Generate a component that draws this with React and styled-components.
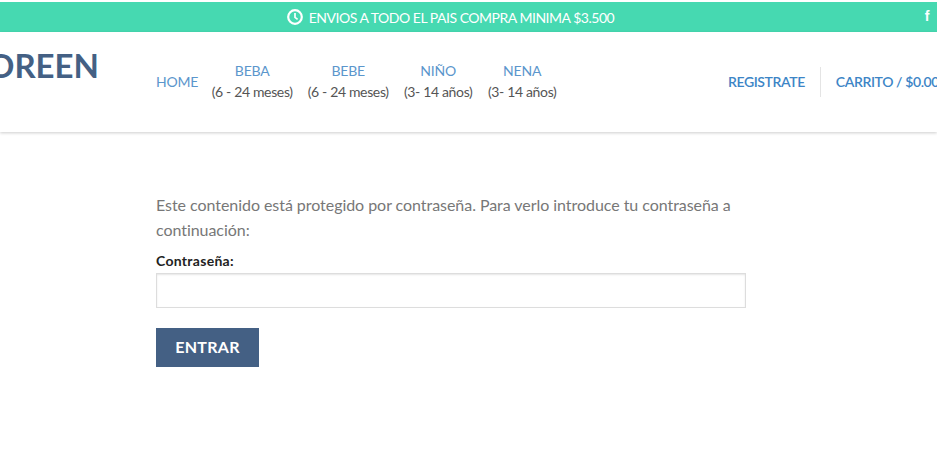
import React from "react";
import styled, { createGlobalStyle } from "styled-components";

const Global = createGlobalStyle`
  html, body { margin: 0; padding: 0; background: #fff; }
  body { font-family: Lato, "Liberation Sans", sans-serif; overflow: hidden; }
`;
const Page = styled.div`
  width: 937px;
  height: 459px;
  overflow: hidden;
  padding-top: 2px;
  box-sizing: border-box;
`;
const TopBar = styled.div`
  position: relative;
  height: 30px;
  background: #46d9b1;
  color: #fff;
  display: flex;
  align-items: center;
  justify-content: center;
  gap: 6px;
  font-size: 14px;
  letter-spacing: -0.48px;
  padding-right: 36px;
`;
const Social = styled.span`
  position: absolute;
  right: 8px;
  top: 6px;
  font: bold 14px "Liberation Sans", sans-serif;
`;
const Header = styled.header`
  height: 100px;
  background: #fff;
  box-shadow: 0 1px 3px rgba(0, 0, 0, 0.2);
  display: flex;
  align-items: center;
  position: relative;
`;
const Logo = styled.div`
  width: 156px;
  flex: none;
  margin-top: -34px;
  font-size: 33px;
  font-weight: 700;
  color: #446084;
  display: flex;
  justify-content: flex-end;
  padding-right: 57px;
  box-sizing: border-box;
  white-space: nowrap;
`;
const Nav = styled.nav`
  display: flex;
  align-items: center;
  gap: 14px;
  flex: none;
  margin-top: -2px;
`;
const NavHome = styled.a`
  color: #5b96cc;
  font-size: 14px;
  letter-spacing: -0.2px;
  margin-right: -1px;
`;
const NavItem = styled.div`
  display: flex;
  flex-direction: column;
  align-items: center;
  width: ${(p) => p.$w}px;
  white-space: nowrap;
  line-height: 21px;
`;
const NavLabel = styled.a`
  color: #5b96cc;
  font-size: 14px;
  letter-spacing: -0.2px;
`;
const NavSub = styled.span`
  color: #555;
  font-size: 14px;
  letter-spacing: -0.35px;
`;
const Right = styled.div`
  position: absolute;
  left: 728px;
  top: 34px;
  display: flex;
  align-items: center;
  white-space: nowrap;
`;
const RightLink = styled.a`
  color: #3d85c6;
  font-size: 14px;
  font-weight: 600;
  letter-spacing: -0.4px;
`;
const Divider = styled.span`
  width: 1px;
  height: 30px;
  background: #e4e4e4;
  margin: 1px 15px 0;
`;
const Main = styled.main`
  padding: 60px 0 0 156px;
  width: 590px;
`;
const Intro = styled.p`
  margin: 0;
  font-size: 16px;
  line-height: 25px;
  color: #777;
  letter-spacing: -0.05px;
`;
const Label = styled.label`
  display: block;
  margin-top: 9px;
  font-size: 14px;
  font-weight: 700;
  color: #222;
  line-height: 20px;
  letter-spacing: 0.3px;
`;
const Input = styled.input`
  display: block;
  box-sizing: border-box;
  width: 590px;
  height: 35px;
  margin-top: 2px;
  border: 1px solid #ddd;
  background: #fff;
  box-shadow: inset 0 1px 2px rgba(0, 0, 0, 0.1);
`;
const Button = styled.button`
  display: block;
  margin-top: 20px;
  width: 103px;
  height: 39px;
  border: 0;
  background: #446084;
  color: #fff;
  font: 700 16px Lato, sans-serif;
  letter-spacing: 0.3px;
  padding: 0 0 2px;
`;

const items = [
  ["BEBA", "(6 - 24 meses)", 82],
  ["BEBE", "(6 - 24 meses)", 82],
  ["NIÑO", "(3- 14 años)", 70],
  ["NENA", "(3- 14 años)", 70],
];

export default function App() {
  return (
    <Page>
      <Global />
      <TopBar>
        <svg width="16" height="16" viewBox="0 0 16 16" fill="none" stroke="#fff" strokeWidth="2.2">
          <circle cx="8" cy="8" r="6.8" />
          <path d="M8 4v4.3l2.6 2" strokeWidth="1.7" />
        </svg>
        <span>ENVIOS A TODO EL PAIS COMPRA MINIMA $3.500</span>
        <Social>f</Social>
      </TopBar>
      <Header>
        <Logo>DOREEN</Logo>
        <Nav>
          <NavHome>HOME</NavHome>
          {items.map(([a, b, w]) => (
            <NavItem key={a} $w={w}>
              <NavLabel>{a}</NavLabel>
              <NavSub>{b}</NavSub>
            </NavItem>
          ))}
        </Nav>
        <Right>
          <RightLink>REGISTRATE</RightLink>
          <Divider />
          <RightLink>CARRITO / $0.00</RightLink>
        </Right>
      </Header>
      <Main>
        <Intro>Este contenido está protegido por contraseña. Para verlo introduce tu contraseña a continuación:</Intro>
        <Label>Contraseña:</Label>
        <Input type="password" />
        <Button>ENTRAR</Button>
      </Main>
    </Page>
  );
}
